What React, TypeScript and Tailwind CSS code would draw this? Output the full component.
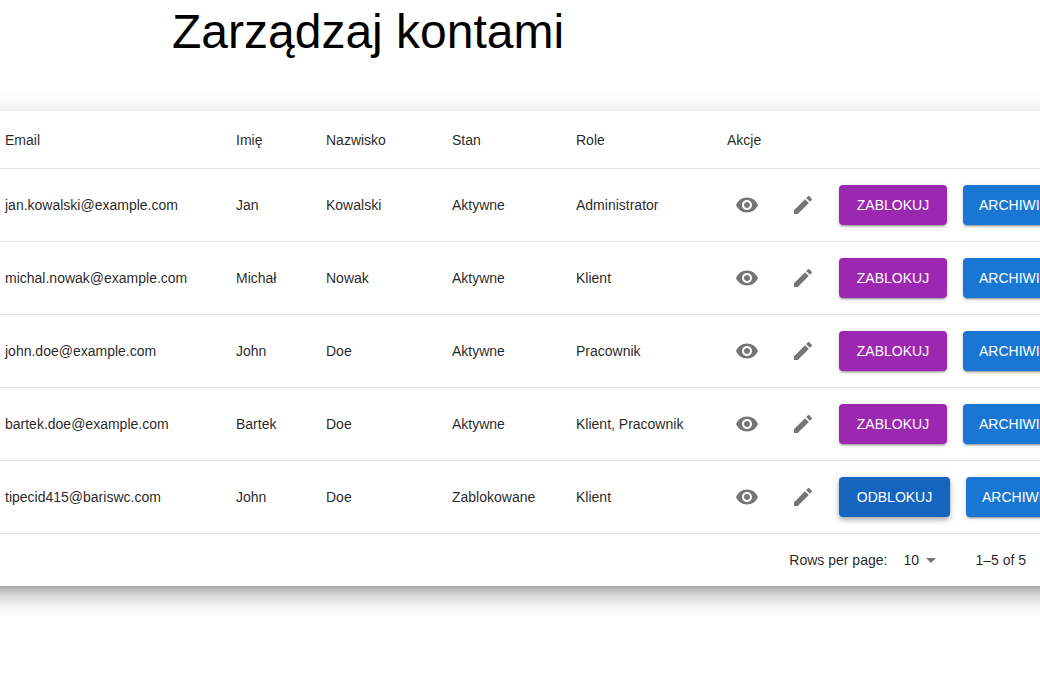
import { MdArrowDropDown, MdEdit, MdVisibility } from "react-icons/md";

type Account = {
  email: string;
  firstName: string;
  lastName: string;
  active: boolean;
  roles: string[];
};

const accounts: Account[] = [
  { email: "jan.kowalski@example.com", firstName: "Jan", lastName: "Kowalski", active: true, roles: ["Administrator"] },
  { email: "michal.nowak@example.com", firstName: "Michał", lastName: "Nowak", active: true, roles: ["Klient"] },
  { email: "john.doe@example.com", firstName: "John", lastName: "Doe", active: true, roles: ["Pracownik"] },
  { email: "bartek.doe@example.com", firstName: "Bartek", lastName: "Doe", active: true, roles: ["Klient", "Pracownik"] },
  { email: "tipecid415@bariswc.com", firstName: "John", lastName: "Doe", active: false, roles: ["Klient"] },
];

const columns = [
  { label: "Email", width: "w-[231px]" },
  { label: "Imię", width: "w-[90px]" },
  { label: "Nazwisko", width: "w-[126px]" },
  { label: "Stan", width: "w-[124px]" },
  { label: "Role", width: "w-[151px]" },
  { label: "Akcje", width: "" },
];

const raised =
  "shadow-[0px_3px_1px_-2px_rgba(0,0,0,0.2),0px_2px_2px_0px_rgba(0,0,0,0.14),0px_1px_5px_0px_rgba(0,0,0,0.12)]";
const lifted =
  "shadow-[0px_2px_4px_-1px_rgba(0,0,0,0.2),0px_4px_5px_0px_rgba(0,0,0,0.14),0px_1px_10px_0px_rgba(0,0,0,0.12)]";
const actionButton = "h-10 shrink-0 rounded px-4 text-sm font-normal uppercase text-white";
const iconButton = "flex size-10 shrink-0 items-center justify-center rounded-full text-[#757575]";
const cell = "border-b border-[#e0e0e0] pl-[5px]";

function AccountRow({ account }: { account: Account }) {
  return (
    <tr className="h-[73px]">
      <td className={cell}>{account.email}</td>
      <td className={cell}>{account.firstName}</td>
      <td className={cell}>{account.lastName}</td>
      <td className={cell}>{account.active ? "Aktywne" : "Zablokowane"}</td>
      <td className={cell}>{account.roles.join(", ")}</td>
      <td className={cell}>
        <div className="flex items-center gap-4">
          <button type="button" aria-label="Szczegóły" className={iconButton}>
            <MdVisibility className="size-6" />
          </button>
          <button type="button" aria-label="Edytuj" className={iconButton}>
            <MdEdit className="size-6" />
          </button>
          {account.active ? (
            <button type="button" className={`${actionButton} ${raised} min-w-[108px] bg-[#9c27b0]`}>
              Zablokuj
            </button>
          ) : (
            <button type="button" className={`${actionButton} ${lifted} min-w-[111px] bg-[#1565c0]`}>
              Odblokuj
            </button>
          )}
          <button type="button" className={`${actionButton} ${raised} bg-[#1976d2]`}>
            Archiwizuj
          </button>
        </div>
      </td>
    </tr>
  );
}

export default function App() {
  return (
    <main className="min-h-screen overflow-hidden bg-white font-['Liberation_Sans',Arial,sans-serif] text-sm text-black/87">
      <h1 className="pl-[172px] pt-1 text-5xl leading-14 text-black">Zarządzaj kontami</h1>
      <section className="-mx-10 mt-[51px] bg-white px-10 shadow-[0px_7px_8px_-4px_rgba(0,0,0,0.2),0px_12px_17px_2px_rgba(0,0,0,0.14),0px_5px_22px_4px_rgba(0,0,0,0.12)]">
        <div className="-mx-10 overflow-hidden px-10">
          <table className="w-full table-fixed border-separate border-spacing-0 text-left">
            <thead>
              <tr className="h-[58px]">
                {columns.map((column) => (
                  <th key={column.label} scope="col" className={`${cell} font-normal ${column.width}`}>
                    {column.label}
                  </th>
                ))}
              </tr>
            </thead>
            <tbody>
              {accounts.map((account) => (
                <AccountRow key={account.email} account={account} />
              ))}
            </tbody>
          </table>
        </div>
        <footer className="flex h-[52px] items-center justify-end pr-[14px]">
          <label htmlFor="rows-per-page">Rows per page:</label>
          <div className="relative ml-4 mr-8 flex items-center">
            <select id="rows-per-page" defaultValue="10" className="w-10 appearance-none bg-transparent">
              <option value="5">5</option>
              <option value="10">10</option>
              <option value="25">25</option>
            </select>
            <MdArrowDropDown className="pointer-events-none absolute right-0 size-6 text-[#757575]" />
          </div>
          <span>1–5 of 5</span>
        </footer>
      </section>
    </main>
  );
}
